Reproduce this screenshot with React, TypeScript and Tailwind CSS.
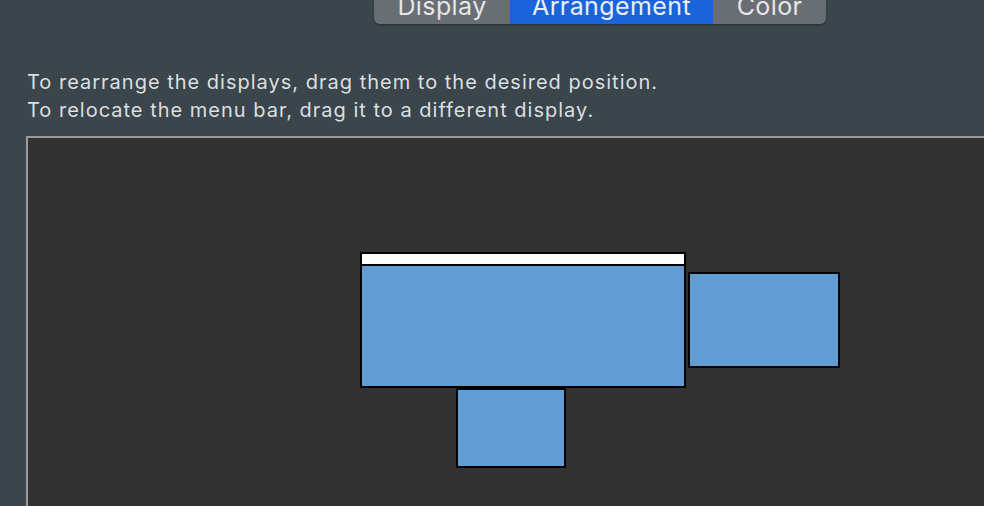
export default function App() {
  return (
    <div
      className="w-[984px] h-[506px] overflow-hidden bg-[#3a454c] flex flex-col"
      style={{ fontFamily: 'Inter, "Liberation Sans", Arial, sans-serif' }}
    >
      <div className="ml-[374px] flex h-[24px] w-[452px] rounded-b-[6px] overflow-hidden shadow-[0_1px_2px_rgba(0,0,0,0.35)] text-[25px] tracking-[0.4px] text-[#e4e6e7]">
        <div className="w-[136px] bg-[#686e73] flex justify-center overflow-hidden">
          <span className="block leading-[30px] -mt-[9px]">Display</span>
        </div>
        <div className="w-[203px] bg-[#1a63d8] flex justify-center overflow-hidden text-[#e8eefb]">
          <span className="block leading-[30px] -mt-[9px]">Arrangement</span>
        </div>
        <div className="w-[113px] bg-[#686e73] flex justify-center overflow-hidden">
          <span className="block leading-[30px] -mt-[9px]">Color</span>
        </div>
      </div>
      <div className="mt-[44px] ml-[27px] text-[20px] tracking-[1px] leading-[28px] text-[#dcdfe0]">
        <p>To rearrange the displays, drag them to the desired position.</p>
        <p>To relocate the menu bar, drag it to a different display.</p>
      </div>
      <div className="mt-[12px] ml-[26px] w-[980px] flex-1 border-t-2 border-l-2 border-[#9a9b9b] bg-[#323232] relative">
        <div className="absolute left-[332px] top-[114px] w-[326px] h-[136px] border-2 border-black bg-[#629cd4] flex flex-col">
          <div className="h-[12px] bg-white border-b-2 border-black" />
        </div>
        <div className="absolute left-[660px] top-[134px] w-[152px] h-[96px] border-2 border-black bg-[#629cd4]" />
        <div className="absolute left-[428px] top-[250px] w-[110px] h-[80px] border-2 border-black bg-[#629cd4]" />
      </div>
    </div>
  );
}
